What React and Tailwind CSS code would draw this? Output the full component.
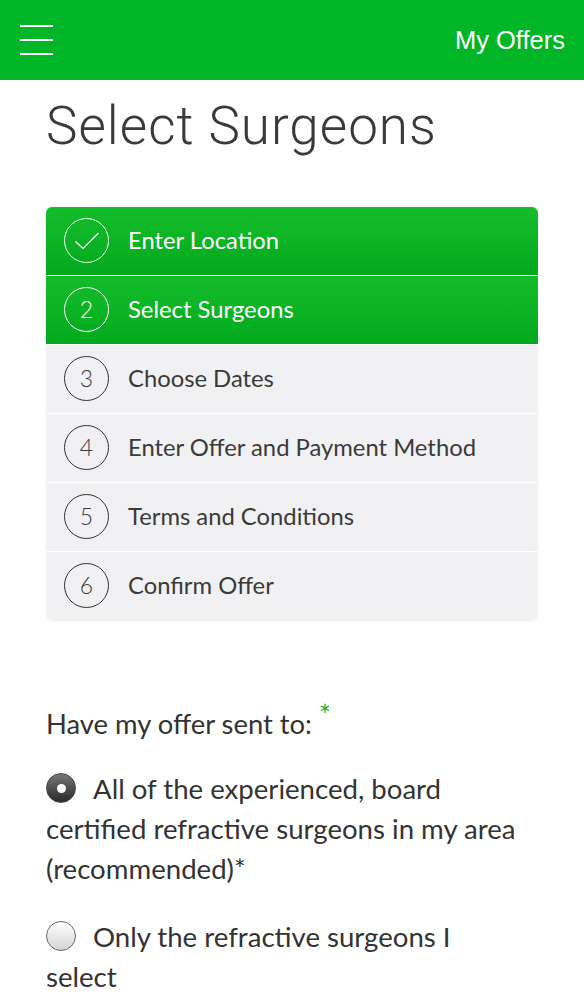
import React from "react";

const steps = [
  { n: 1, label: "Enter Location", done: true },
  { n: 2, label: "Select Surgeons", active: true },
  { n: 3, label: "Choose Dates" },
  { n: 4, label: "Enter Offer and Payment Method" },
  { n: 5, label: "Terms and Conditions" },
  { n: 6, label: "Confirm Offer" },
];

const StepRow = ({ step }) => {
  const green = step.done || step.active;
  return (
    <div
      className={
        green
          ? "flex h-[68px] items-center bg-gradient-to-b from-[#14bd2b] to-[#03a91d] text-white"
          : "flex h-[68px] items-center bg-[#f1f1f3] text-[#3a3a3a]"
      }
    >
      <div
        className={
          green
            ? "ml-[18px] flex h-[45px] w-[45px] items-center justify-center rounded-full border-[1.5px] border-white text-[23px] font-light"
            : "ml-[18px] flex h-[45px] w-[45px] items-center justify-center rounded-full border-[1.5px] border-[#333] text-[23px] font-light"
        }
      >
        {step.done ? (
          <svg width="26" height="20" viewBox="0 0 26 20" fill="none">
            <path d="M1.5 10.5 L9 17.5 L24.5 2" stroke="white" strokeWidth="1.2" />
          </svg>
        ) : (
          step.n
        )}
      </div>
      <span className="ml-[19px] text-[23.8px]">{step.label}</span>
    </div>
  );
};

const App = () => {
  return (
    <div className="min-h-[1000px] bg-white" style={{ fontFamily: "Lato, 'Open Sans', sans-serif" }}>
      <header className="flex h-[80px] items-center justify-between bg-[#00b526] pl-[20px] pr-[19px]">
        <div className="flex w-[33px] flex-col gap-[12px]">
          <span className="h-[2px] w-full bg-white" />
          <span className="h-[2px] w-full bg-white" />
          <span className="h-[2px] w-full bg-white" />
        </div>
        <span className="text-[25.5px] text-white" style={{ fontFamily: "'Liberation Sans', Arial, sans-serif" }}>
          My Offers
        </span>
      </header>

      <div className="px-[46px]">
        <h1
          className="mt-[7px] text-[53px] font-light tracking-[1px] text-[#3a3a3a]"
          style={{ fontFamily: "Roboto, 'Open Sans', sans-serif" }}
        >
          Select Surgeons
        </h1>

        <div className="mt-[40px] flex flex-col gap-px overflow-hidden rounded-[6px] bg-white shadow-[0_1px_2px_rgba(0,0,0,0.08)]">
          {steps.map((s) => (
            <StepRow key={s.n} step={s} />
          ))}
        </div>

        <p className="mt-[84px] text-[27.4px] leading-[40px] text-[#333]">
          Have my offer sent to:{" "}
          <span className="relative -top-[8px] text-[28px] leading-none text-[#18b432]">*</span>
        </p>

        <div className="mt-[25px] w-[478px] text-[27.6px] leading-[40px] text-[#333]">
          <label className="block">
            <span className="mr-[17px] inline-block h-[30px] w-[30px] translate-y-[4px] rounded-full border border-[#444] bg-gradient-to-b from-[#777] to-[#2b2b2b] p-[10px]">
              <span className="block h-[9px] w-[9px] rounded-full bg-white" />
            </span>
            All of the experienced, board certified refractive surgeons in my area (recommended)*
          </label>
          <label className="mt-[28px] block">
            <span className="mr-[17px] inline-block h-[30px] w-[30px] translate-y-[4px] rounded-full border border-[#666] bg-gradient-to-b from-white to-[#d4d4d4]" />
            Only the refractive surgeons I select
          </label>
        </div>
      </div>
    </div>
  );
};

export default App;
